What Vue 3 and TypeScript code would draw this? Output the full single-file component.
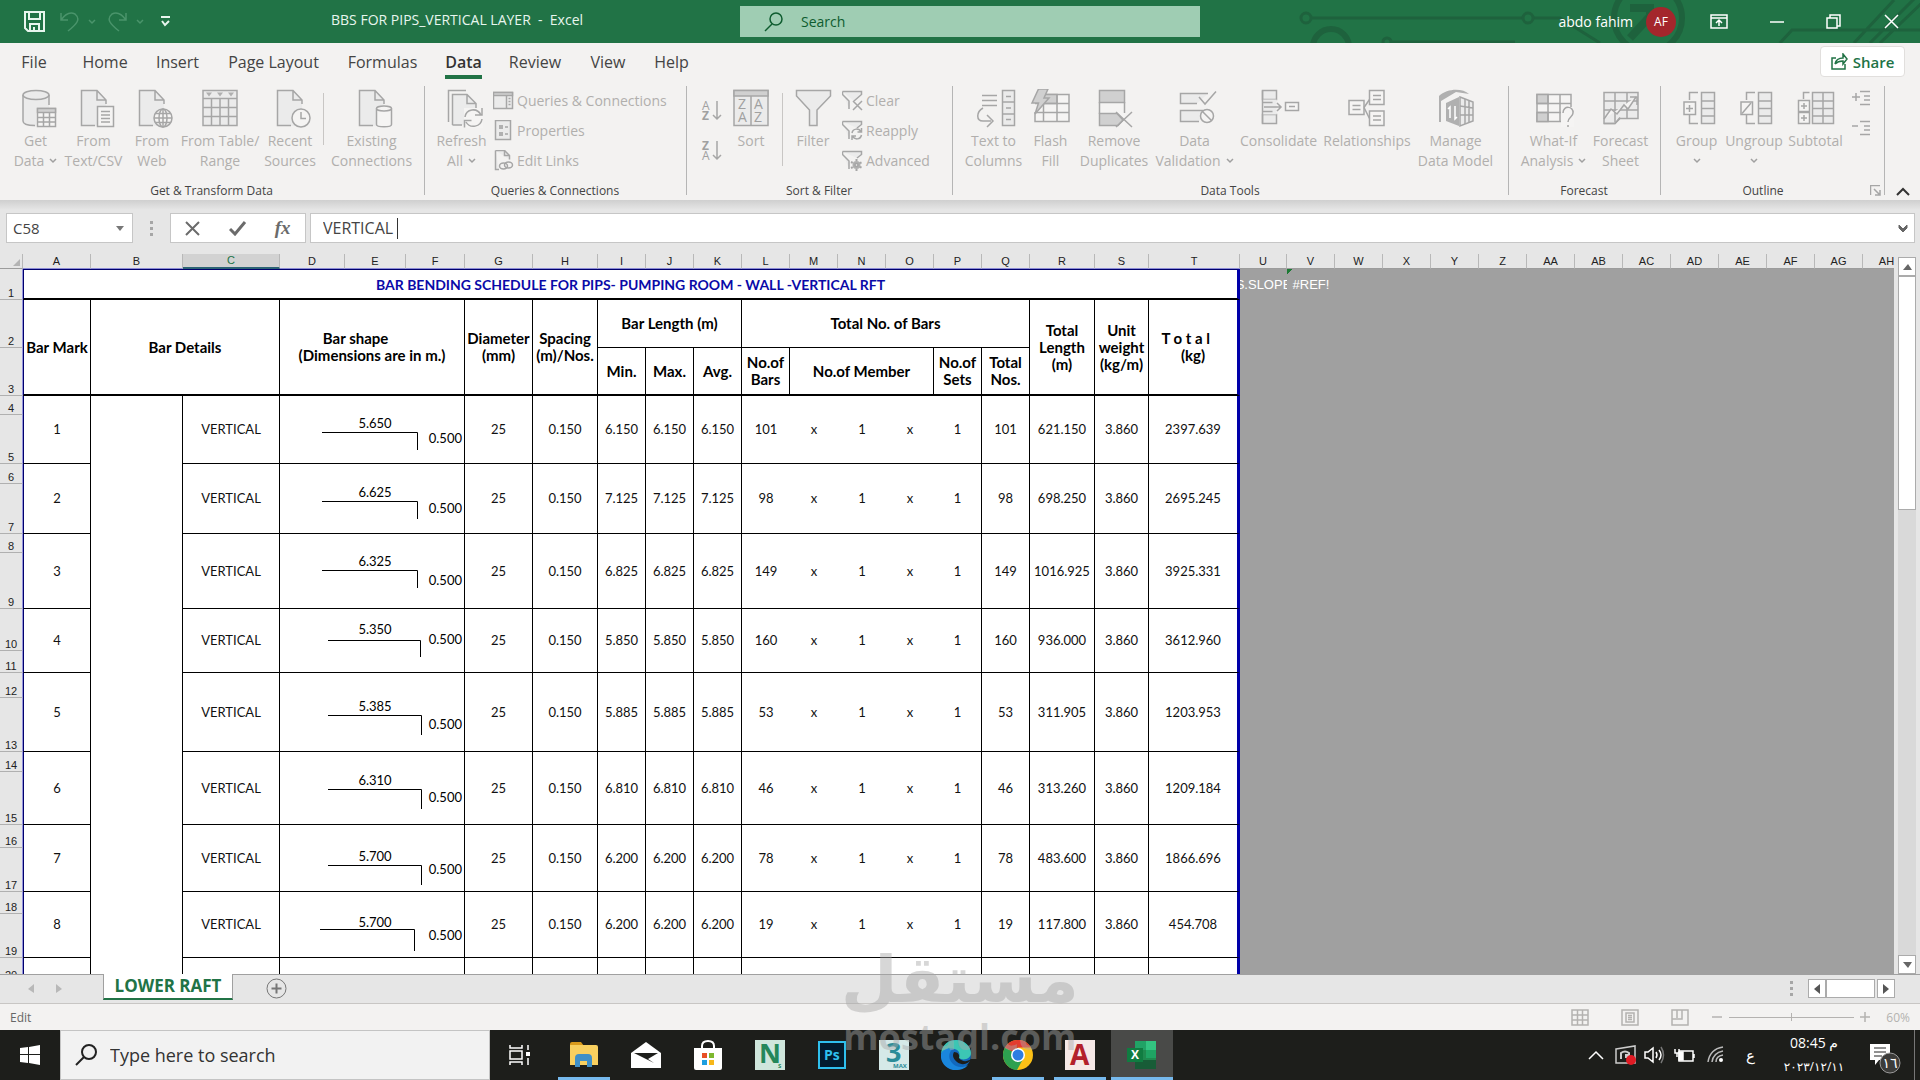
<script setup lang="ts">
interface Cmd {
  label: string[]
  icon: string
  width: number
  menu?: boolean
}

interface BarRow {
  mark: number
  top: number
  bottom: number
  length: string
  total: string
  count: number
  run: string
  weight: string
  x1: number
  x2: number
  line: number
  drop: number
  text: number
  side: number
}

const page = '<path class="f" d="M9.500 1.500H25L34 11V37H9.500Z" stroke="none"/><path d="M34 15V11L25 1.500H9.500V36.500H23M25 1.500V11H34"/>'

const icons: Record<string, string> = {
  getData:
    '<path class="f" d="M9 6V33c0 3 6 4.500 13 4.500V19H35V6z" stroke="none"/><ellipse class="f" cx="22" cy="6" rx="13" ry="4.500"/><path d="M9 6V32c0 3 5 4.500 12 4.500M35 6V16"/><path class="w" d="M23.500 19.500h18v18h-18z"/><path class="g" d="M23.500 19.500h18v4h-18z"/><path d="M29.500 23V37M35.500 23V37M23.500 28.500h18M23.500 33h18"/>',
  textCsv: page + '<path class="w" d="M25.500 17.500h16v20h-16z"/><path d="M29 22.500h9M29 26h9M29 29.500h9M29 33h9"/>',
  web: page + '<circle class="w" cx="33" cy="29" r="9"/><ellipse cx="33" cy="29" rx="4" ry="9"/><path d="M24 29h18M25.500 24.500h15M25.500 33.500h15M33 20v18"/>',
  table:
    '<path class="f" d="M5 1.500h34v35H5z"/><path d="M5 9.500h34M5 18.500h34M5 27.500h34M13.500 9.500v27M22 9.500v27M30.500 9.500v27"/><path class="d" d="M8 3.500h6l-3 4zM19 3.500h6l-3 4zM30 3.500h6l-3 4z"/>',
  recent: page + '<circle class="w" cx="33" cy="29" r="9"/><path d="M33 23v6.500h5"/>',
  existing: page + '<path class="w" d="M26.500 19.500v16c0 3 15 3 15 0v-16"/><ellipse class="w" cx="34" cy="19.500" rx="7.500" ry="2.500"/>',
  refresh:
    '<path d="M8.500 33V1.500H26"/><path class="f" d="M12.500 5.500H27l9 9V36H12.500z" stroke="none"/><path d="M12.500 36V5.500H27l9 9V19M12.500 36H22M27 5.500v9h9"/><path class="w" stroke="none" d="M24 19h19v20H24z"/><path d="M25 28c1-8 12-10 16-2M42 19v7h-7M42 30c-1 8-12 10-16 3M24.500 38.500v-7h7"/>',
  sort:
    '<path class="f" d="M5 1.500h34v35H5z"/><path class="g" d="M5 1.500h34v5.500H5z"/><path d="M22 7v29.500"/><g class="t" font-size="14"><text x="9" y="20">Z</text><text x="9" y="33">A</text><text x="25" y="20">A</text><text x="25" y="33">Z</text></g>',
  filter: '<path class="f" d="M5.500 1.500h34v5.500L26 21V36.500H18.500V21L5.500 7z"/>',
  columns:
    '<path class="f" d="M30.500 1.500h12v35h-12z"/><path d="M30.500 13h12M30.500 25h12M34 7.500h5M34 19h5M34 30.500h5M10 6.500h15M10 11.500h15M10 16.500h15M11 19c-7 4-7 13 0 13h8M15 26l6 6-6 6"/>',
  flash:
    '<path class="w" d="M14.500 5.500H40v27H6V23"/><path class="g" d="M14.500 5.500H28v9H14.500z"/><path d="M6 14.500h34M6 23.500h34M14.500 14.500v18M28 5.500v27"/><path class="g" d="M9.500 0H19l-4 9h5L6 25l3.500-11H3z"/>',
  duplicates:
    '<path class="w" d="M7.500 1.500h25v35h-25z" stroke="none"/><path class="g" d="M7.500 1.500h25v12h-25z"/><path class="g" d="M7.500 24.500H25L31 31l-5 5.500H7.500z"/><path d="M7.500 13v12M32.500 13V24M24 23l16 15M40 23L24 38"/>',
  validation:
    '<path class="f" d="M35 4.500H7.500v10H24M30 21.500H7.500v11H26"/><path d="M26 8l6 7L43 2.500"/><circle class="w" cx="34" cy="27" r="6.500"/><path d="M29.500 22.500l9 9"/>',
  consolidate:
    '<path class="f" d="M5.500 1.500h14v9h-14zM5.500 25.500h14v9h-14z"/><path class="f" d="M5.500 10.500h14v15h-14z" stroke="none"/><path d="M5.500 1.500v33M5.500 13.500h10M5.500 22.500h10M7 18h17M20 14l4 4-4 4"/><path class="w" d="M28.500 13.500h13v8h-13z"/><path d="M32 17.500h6"/>',
  relations:
    '<path class="w" d="M4 11.500h15v14H4zM24.500 1.500H39v14H24.500zM24.500 22H39v14.500H24.500z"/><path d="M7.500 16.500h8M7.500 20.500h8M28 6.500h8M28 10.500h8M28 27h8M28 31h8M19 18.500l5.500-8M19 18.500l5.500 11"/>',
  model:
    '<path class="d" d="M5 7C13-1 29-1 35 5L22 3 7 12V33H5z"/><path class="d" d="M12 14l13-6v29l-13-5z"/><path class="f" d="M26 8l13 5v19l-13 5z"/><path d="M26 17l13 2M26 26h13M31 10v25M35 12v21"/><path stroke="#fff" d="M16 29V18l-2 2M21 17v13l2-2"/>',
  whatIf:
    '<path class="w" d="M5 5.500h34v27H5z"/><path class="g" d="M5 5.500h11v9H5zM5 23.500h11v9H5z"/><path d="M16 5.500v27M28 5.500v27M5 14.500h34M5 23.500h34"/><path class="w" stroke="none" d="M29 18h13v20H29z"/><path d="M31 24c0-8 11-7 10 0 0 4-5 4-5 9M36 36v2"/>',
  forecast:
    '<path class="f" d="M5 3.500h34v26H21l-5 5H5z"/><path d="M5 12h34M5 21h34M16 3.500v30M28 3.500v26"/><path class="w" d="M5 30l7-10 6 5 7-9 4 4 8-12" fill="none"/><path d="M31 8h7v8M5 34.500h11l5-6"/>',
  group:
    '<path class="f" d="M26.500 3.500h13v31h-13z"/><path d="M26.500 12h13M26.500 19.500h13M26.500 27h13M14.500 11V3.500H23M14.500 26v8.500H23"/><path class="w" d="M9 13h11.500v12.500H9z"/><path d="M14.500 16v7M11 19.500h7"/>',
  ungroup:
    '<path class="f" d="M26.500 3.500h13v31h-13z"/><path d="M26.500 12h13M26.500 19.500h13M26.500 27h13M14.500 11V3.500H23M14.500 26v8.500H23"/><path class="w" d="M9 13h11.500v12.500H9z"/><path d="M10 24.500l9-10.500"/>',
  subtotal:
    '<path class="f" d="M18.500 3.500h21v31h-21z"/><path d="M18.500 12h21M18.500 19.500h21M18.500 27h21M29 3.500v31M9.500 10V3.500h6"/><path class="w" d="M4.500 11.500h11v11h-11zM4.500 23.500h11v11h-11z"/><path d="M10 14v6M7 17h6M10 26v6M7 29h6"/>',
}

const small: Record<string, string> = {
  queries: '<path class="f" d="M.5 2.500h19v16H.5z"/><path class="g" d="M.5 2.500h19v3H.5z"/><path d="M13.500 5.500v13M15.500 8.500h2M15.500 11.500h2M15.500 14.500h2"/>',
  properties: '<path class="f" d="M2.500.5h15v19h-15z"/><path class="d" d="M6 5h4v4H6zM6 12h4v4H6z"/><path d="M12 7h3M12 14h3"/>',
  links: '<path class="f" d="M2.500.5h9l5 5v4M2.500.5v19H6"/><path d="M11.500.5v5h5"/><ellipse cx="10.500" cy="16" rx="4" ry="3"/><ellipse cx="15.500" cy="15" rx="4" ry="3"/>',
  clear: '<path class="f" d="M.5 1.500h19v3L12 11M.5 1.500v3L7 11v8"/><path d="M11 11l9 9M20 11l-9 9"/>',
  reapply: '<path class="f" d="M.5 1.500h19v3L15 8M.5 1.500v3L7 11v8"/><path d="M10 13c1-5 7-5 9-1M19.500 8v4h-4M19.500 15c-1 5-7 5-9 1M10 20v-4h4"/>',
  advanced: '<path class="f" d="M.5 1.500h19v3L15 8M.5 1.500v3L7 11v8"/><circle class="d" cx="14.500" cy="15" r="4"/><circle class="w" cx="14.500" cy="15" r="1.500"/><path stroke-width="2" d="M14.500 9v12M9 12l11 6M9 18l11-6" stroke-dasharray="2 8"/>',
}

const getCmds: Cmd[] = [
  { label: ['Get', 'Data'], icon: 'getData', width: 55, menu: true },
  { label: ['From', 'Text/CSV'], icon: 'textCsv', width: 61 },
  { label: ['From', 'Web'], icon: 'web', width: 56 },
  { label: ['From Table/', 'Range'], icon: 'table', width: 80 },
  { label: ['Recent', 'Sources'], icon: 'recent', width: 60 },
]
const toolCmds: Cmd[] = [
  { label: ['Text to', 'Columns'], icon: 'columns', width: 67 },
  { label: ['Flash', 'Fill'], icon: 'flash', width: 47 },
  { label: ['Remove', 'Duplicates'], icon: 'duplicates', width: 80 },
  { label: ['Data', 'Validation'], icon: 'validation', width: 81, menu: true },
  { label: ['Consolidate'], icon: 'consolidate', width: 87 },
  { label: ['Relationships'], icon: 'relations', width: 90 },
  { label: ['Manage', 'Data Model'], icon: 'model', width: 87 },
]
const forecastCmds: Cmd[] = [
  { label: ['What-If', 'Analysis'], icon: 'whatIf', width: 71, menu: true },
  { label: ['Forecast', 'Sheet'], icon: 'forecast', width: 63 },
]
const outlineCmds: Cmd[] = [
  { label: ['Group', ''], icon: 'group', width: 55, menu: true },
  { label: ['Ungroup', ''], icon: 'ungroup', width: 60, menu: true },
  { label: ['Subtotal'], icon: 'subtotal', width: 63 },
]
const existingCmd: Cmd[] = [{ label: ['Existing', 'Connections'], icon: 'existing', width: 87 }]
const refreshCmd: Cmd[] = [{ label: ['Refresh', 'All'], icon: 'refresh', width: 57, menu: true }]
const sortCmd: Cmd[] = [{ label: ['Sort'], icon: 'sort', width: 52 }]
const filterCmd: Cmd[] = [{ label: ['Filter'], icon: 'filter', width: 52 }]

const groups = [
  { name: 'Get & Transform Data', width: 425, parts: [getCmds, existingCmd], smalls: [] as string[][], pad: 8 },
  { name: 'Queries & Connections', width: 262, parts: [refreshCmd], smalls: [['queries', 'Queries & Connections'], ['properties', 'Properties'], ['links', 'Edit Links']], pad: 8 },
  { name: 'Sort & Filter', width: 266, parts: [sortCmd, filterCmd], smalls: [['clear', 'Clear'], ['reapply', 'Reapply'], ['advanced', 'Advanced']], pad: 13 },
  { name: 'Data Tools', width: 556, parts: [toolCmds], smalls: [], pad: 7 },
  { name: 'Forecast', width: 152, parts: [forecastCmds], smalls: [], pad: 9 },
  { name: 'Outline', width: 224, parts: [outlineCmds], smalls: [], pad: 8 },
]

const tabs = [
  { name: 'File', width: 52 },
  { name: 'Home', width: 90 },
  { name: 'Insert', width: 55 },
  { name: 'Page Layout', width: 137 },
  { name: 'Formulas', width: 81 },
  { name: 'Data', width: 81 },
  { name: 'Review', width: 62 },
  { name: 'View', width: 84 },
  { name: 'Help', width: 43 },
]

const columns = [
  ['A', 68], ['B', 92], ['C', 97], ['D', 65], ['E', 61], ['F', 59], ['G', 68], ['H', 65],
  ['I', 48], ['J', 48], ['K', 48], ['L', 48], ['M', 48], ['N', 48], ['O', 48], ['P', 48],
  ['Q', 48], ['R', 65], ['S', 54], ['T', 91], ['U', 47], ['V', 48], ['W', 48], ['X', 48],
  ['Y', 48], ['Z', 48], ['AA', 48], ['AB', 48], ['AC', 48], ['AD', 48], ['AE', 48],
  ['AF', 48], ['AG', 48], ['AH', 48],
] as [string, number][]

const rowHeadWidth = 23
const tableWidth = columns.reduce((sum, c) => sum + c[1], rowHeadWidth)

const bars: BarRow[] = [
  { mark: 1, top: 19, bottom: 49, length: '5.650', total: '6.150', count: 101, run: '621.150', weight: '2397.639', x1: 42, x2: 137, line: 36, drop: 54, text: 32, side: 47 },
  { mark: 2, top: 20, bottom: 50, length: '6.625', total: '7.125', count: 98, run: '698.250', weight: '2695.245', x1: 42, x2: 137, line: 37, drop: 55, text: 33, side: 49 },
  { mark: 3, top: 19, bottom: 56, length: '6.325', total: '6.825', count: 149, run: '1016.925', weight: '3925.331', x1: 42, x2: 137, line: 36, drop: 54, text: 32, side: 51 },
  { mark: 4, top: 42, bottom: 22, length: '5.350', total: '5.850', count: 160, run: '936.000', weight: '3612.960', x1: 48, x2: 140, line: 31, drop: 48, text: 25, side: 35 },
  { mark: 5, top: 25, bottom: 54, length: '5.385', total: '5.885', count: 53, run: '311.905', weight: '1203.953', x1: 48, x2: 141, line: 42, drop: 62, text: 38, side: 56 },
  { mark: 6, top: 20, bottom: 53, length: '6.310', total: '6.810', count: 46, run: '313.260', weight: '1209.184', x1: 48, x2: 141, line: 37, drop: 57, text: 33, side: 50 },
  { mark: 7, top: 23, bottom: 44, length: '5.700', total: '6.200', count: 78, run: '483.600', weight: '1866.696', x1: 48, x2: 141, line: 40, drop: 60, text: 36, side: 49 },
  { mark: 8, top: 22, bottom: 44, length: '5.700', total: '6.200', count: 19, run: '117.800', weight: '454.708', x1: 40, x2: 134, line: 37, drop: 59, text: 35, side: 48 },
]
</script>

<template>
  <div class="app">
    <header class="title">
      <svg class="circuit" width="640" height="43" aria-hidden="true">
        <g fill="none" stroke="#1e623d" stroke-width="3">
          <circle cx="26" cy="18" r="5" /><path d="M32 18H242M254 18h26l40 25" /><circle cx="248" cy="18" r="5" />
          <circle cx="51" cy="47" r="18" stroke-width="6" /><circle cx="107" cy="42" r="4" /><path d="M112 42H235" />
          <circle cx="368" cy="18" r="34" stroke-width="6" /><path d="M350 8h20v6M350 38l24-26" stroke-width="8" />
          <path d="M500 43l12-13H640M574 43l40-43M590 43l50-50M600 43l45-43" />
        </g>
      </svg>
      <div class="quick">
        <button class="ib save" aria-label="Save"><svg width="22" height="22"><path d="M1 1h19v19H4l-3-3zM5 1v7h11V1M6 20v-7h9v7M10 16v4" stroke="#e8f6ee" stroke-width="2" fill="none" /></svg></button>
        <button class="ib dim undo" aria-label="Undo"><svg width="20" height="22"><path d="M1 2v7h7M1 9C6 2 11 1 15 3c6 5 2 10-7 17" /></svg></button>
        <button class="ib dim chev" aria-label="Undo list"><svg width="9" height="6"><path d="M1 1l3 3 3-3" /></svg></button>
        <button class="ib dim undo" aria-label="Redo"><svg width="20" height="22"><path d="M18 2v7h-7M18 9C13 2 8 1 4 3c-6 5-2 10 7 17" /></svg></button>
        <button class="ib dim chev" aria-label="Redo list"><svg width="9" height="6"><path d="M1 1l3 3 3-3" /></svg></button>
        <button class="ib more" aria-label="Customize toolbar"><svg width="11" height="11"><path d="M1 1h9M2 5l3 4 4-4" stroke="#e8f6ee" stroke-width="2" fill="none" /></svg></button>
      </div>
      <div class="doc">BBS FOR PIPS_VERTICAL LAYER&nbsp; -&nbsp; Excel</div>
      <label class="find">
        <svg width="20" height="20"><circle cx="12" cy="7" r="6" /><path d="M8 12l-7 7" /></svg>
        <input type="text" placeholder="Search" aria-label="Search" />
      </label>
      <div class="winbar">
        <span class="user">abdo fahim</span>
        <span class="avatar">AF</span>
        <button class="ib" aria-label="Ribbon display options"><svg width="18" height="16"><path d="M1 1h16v13H1zM1 4h16M9 12V6M6 9l3-3 3 3" /></svg></button>
        <button class="ib" aria-label="Minimize"><svg width="14" height="16"><path d="M0 8h14" /></svg></button>
        <button class="ib" aria-label="Restore"><svg width="16" height="16"><path d="M1 4h10v10H1zM4 4V1h10v11h-3" /></svg></button>
        <button class="ib" aria-label="Close"><svg width="16" height="16"><path d="M1 1l13 13M14 1L1 14" /></svg></button>
      </div>
    </header>

    <nav class="tabs">
      <button v-for="t in tabs" :key="t.name" :class="{ on: t.name === 'Data' }" :style="{ width: t.width + 'px' }"><span>{{ t.name }}</span></button>
      <button class="share"><svg width="17" height="17"><path d="M5 5H1v11h13v-5M4 11c1-5 4-6 8-6V1l4 5-4 5V8c-4 0-6 1-8 3" fill="none" stroke="#217346" stroke-width="1.500" /></svg>Share</button>
    </nav>

    <section class="ribbon">
      <div v-for="g in groups" :key="g.name" class="rgroup" :style="{ width: g.width + 'px' }">
        <div class="items" :style="{ paddingLeft: g.pad + 'px' }">
          <div v-if="g.name === 'Sort & Filter'" class="az">
            <button aria-label="Sort A to Z"><svg class="ri" width="24" height="26"><g class="t" font-size="12"><text x="2" y="12">A</text><text x="2" y="22" font-weight="bold">Z</text></g><path d="M17 3v18M13 17l4 4 4-4" /></svg></button>
            <button aria-label="Sort Z to A"><svg class="ri" width="24" height="26"><g class="t" font-size="12"><text x="2" y="12" font-weight="bold">Z</text><text x="2" y="22">A</text></g><path d="M17 3v18M13 17l4 4 4-4" /></svg></button>
          </div>
          <template v-for="(part, i) in g.parts" :key="i">
            <i v-if="i > 0" class="isep" :class="{ tall: g.name === 'Sort & Filter' }"></i>
            <button v-for="c in part" :key="c.icon" class="big" :style="{ width: c.width + 'px' }">
              <svg class="ri" width="44" height="40" v-html="icons[c.icon]"></svg>
              <span v-for="(l, k) in c.label" :key="k">{{ l }}<svg v-if="c.menu && k === 1" class="mc" width="8" height="6"><path d="M1 1l3 3 3-3" /></svg></span>
            </button>
          </template>
          <div v-if="g.smalls.length" class="smalls">
            <button v-for="s in g.smalls" :key="s[0]"><svg class="ri" width="21" height="21" v-html="small[s[0]]"></svg>{{ s[1] }}</button>
          </div>
          <div v-if="g.name === 'Outline'" class="detail">
            <button aria-label="Show Detail"><svg class="ri" width="19" height="16"><path d="M8 1.500h10M12 6h6M12 10h6M8 14.500h10M0 7h8M4 3v8" /></svg></button>
            <button aria-label="Hide Detail"><svg class="ri" width="19" height="16"><path d="M8 1.500h10M12 6h6M12 10h6M8 14.500h10M0 6h6" /></svg></button>
          </div>
        </div>
        <div class="gname"><span>{{ g.name }}</span>
          <button v-if="g.name === 'Outline'" class="launch" aria-label="Outline settings"><svg class="ri" width="11" height="11"><path d="M.5 10V.5H10M4 4l6 6M10 5v5H5" /></svg></button>
        </div>
      </div>
      <button class="collapse" aria-label="Collapse ribbon"><svg width="14" height="9"><path d="M1 8l6-6 6 6" fill="none" stroke="#333" stroke-width="2" /></svg></button>
    </section>

    <section class="fbar">
      <div class="namebox"><input type="text" value="C58" aria-label="Name Box" /><svg width="8" height="5"><path d="M0 0h8L4 5z" fill="#777" /></svg></div>
      <div class="dots"><i></i><i></i><i></i></div>
      <div class="fbtns">
        <button aria-label="Cancel"><svg width="16" height="15"><path d="M1 1l13 13M14 1L1 14" stroke="#6b6b6b" stroke-width="2" /></svg></button>
        <button aria-label="Enter"><svg width="18" height="15"><path d="M1 8l5 5L16 1" stroke="#6b6b6b" stroke-width="3" fill="none" /></svg></button>
        <button class="fx" aria-label="Insert Function">fx</button>
      </div>
      <div class="formula"><input type="text" value="VERTICAL" aria-label="Formula Bar" /><i class="caret"></i><svg width="10" height="9"><path d="M1 1l4 4 4-4v3L5 8 1 4z" fill="#666" stroke="#666" /></svg></div>
    </section>

    <main class="work">
      <div class="sheet">
        <table :style="{ width: tableWidth + 'px' }">
          <colgroup><col :style="{ width: rowHeadWidth + 'px' }" /><col v-for="c in columns" :key="c[0]" :style="{ width: c[1] + 'px' }" /></colgroup>
          <thead>
            <tr>
              <th class="corner"><svg width="8" height="8"><path d="M7 0v7H0z" fill="#b4b4b4" /></svg></th>
              <th v-for="(c, i) in columns" :key="c[0]" scope="col" :class="{ inside: i < 20, pick: c[0] === 'C' }">{{ c[0] }}</th>
            </tr>
          </thead>
          <tbody>
            <tr class="r1">
              <th class="rn">1</th>
              <td colspan="20" class="caption last first">BAR BENDING SCHEDULE FOR PIPS- PUMPING ROOM - WALL -VERTICAL RFT</td>
              <td class="out"><div class="over">S.SLOPE</div></td>
              <td class="out flag">#REF!</td>
              <td class="out" colspan="12"></td>
            </tr>
            <tr class="hd">
              <th class="rn">2</th>
              <th rowspan="2" class="first b2">Bar Mark</th>
              <th rowspan="2" colspan="2" class="b2">Bar Details</th>
              <th rowspan="2" colspan="3" class="b2">Bar shape&nbsp;&nbsp;&nbsp;&nbsp;&nbsp;&nbsp;&nbsp;&nbsp;&nbsp;<br />(Dimensions are in m.)</th>
              <th rowspan="2" class="b2">Diameter<br />(mm)</th>
              <th rowspan="2" class="b2">Spacing<br />(m)/Nos.</th>
              <th colspan="3">Bar Length (m)</th>
              <th colspan="6">Total No. of Bars</th>
              <th rowspan="2" class="b2">Total<br />Length<br />(m)</th>
              <th rowspan="2" class="b2">Unit<br />weight<br />(kg/m)</th>
              <th rowspan="2" class="b2 last">T o t a l&nbsp;&nbsp;&nbsp;&nbsp;<br />(kg)</th>
              <td class="out" colspan="14" rowspan="19"></td>
            </tr>
            <tr class="hd">
              <th class="rn">3</th>
              <th class="b2">Min.</th><th class="b2">Max.</th><th class="b2">Avg.</th>
              <th class="b2">No.of<br />Bars</th><th class="b2" colspan="3">No.of Member</th>
              <th class="b2">No.of<br />Sets</th><th class="b2">Total<br />Nos.</th>
            </tr>
            <template v-for="(b, i) in bars" :key="b.mark">
              <tr :style="{ height: b.top + 'px' }">
                <th class="rn">{{ 4 + i * 2 }}</th>
                <td rowspan="2" class="first">{{ b.mark }}</td>
                <td v-if="i === 0" rowspan="17"></td>
                <td rowspan="2">VERTICAL</td>
                <td rowspan="2" colspan="3" class="shape">
                  <svg width="184" :height="b.top + b.bottom - 1">
                    <path :d="`M${b.x1} ${b.line}.5H${b.x2}.5V${b.drop}`" fill="none" stroke="#000" />
                    <text x="95" :y="b.text" text-anchor="middle">{{ b.length }}</text>
                    <text x="182" :y="b.side" text-anchor="end">0.500</text>
                  </svg>
                </td>
                <td rowspan="2">25</td>
                <td rowspan="2">0.150</td>
                <td rowspan="2">{{ b.total }}</td><td rowspan="2">{{ b.total }}</td><td rowspan="2">{{ b.total }}</td>
                <td rowspan="2" class="open">{{ b.count }}</td>
                <td rowspan="2" class="open">x</td><td rowspan="2" class="open">1</td><td rowspan="2" class="open">x</td>
                <td rowspan="2">1</td>
                <td rowspan="2">{{ b.count }}</td>
                <td rowspan="2">{{ b.run }}</td>
                <td rowspan="2">3.860</td>
                <td rowspan="2" class="last">{{ b.weight }}</td>
              </tr>
              <tr :style="{ height: b.bottom + 'px' }"><th class="rn">{{ 5 + i * 2 }}</th></tr>
            </template>
            <tr class="r20">
              <th class="rn">20</th>
              <td class="first"></td><td></td><td colspan="3"></td><td></td><td></td><td></td><td></td><td></td>
              <td class="open"></td><td class="open"></td><td class="open"></td><td class="open"></td><td></td><td></td><td></td><td></td><td class="last"></td>
            </tr>
          </tbody>
        </table>
      </div>
      <div class="vscroll">
        <button aria-label="Scroll up"><svg width="9" height="6"><path d="M0 6h9L5 0z" fill="#666" /></svg></button>
        <div class="vthumb"></div>
        <div class="grow"></div>
        <button aria-label="Scroll down"><svg width="9" height="6"><path d="M0 0h9L5 6z" fill="#666" /></svg></button>
      </div>
    </main>

    <section class="sheets">
      <button class="nav" aria-label="Previous sheet"><svg width="6" height="9"><path d="M6 0v9L0 5z" fill="#b8b8b8" /></svg></button>
      <button class="nav" aria-label="Next sheet"><svg width="6" height="9"><path d="M0 0v9l6-4z" fill="#b8b8b8" /></svg></button>
      <button class="stab">LOWER RAFT</button>
      <button class="add" aria-label="New sheet"><svg width="21" height="21"><circle cx="10.500" cy="10.500" r="9.500" fill="none" stroke="#777" /><path d="M10.500 5.500v10M5.500 10.500h10" stroke="#777" stroke-width="2" /></svg></button>
      <div class="dots hd3"><i></i><i></i><i></i></div>
      <div class="hscroll">
        <button aria-label="Scroll left"><svg width="6" height="10"><path d="M6 0v10L0 5z" fill="#555" /></svg></button>
        <div class="hthumb"></div>
        <button aria-label="Scroll right"><svg width="6" height="10"><path d="M0 0v10l6-5z" fill="#555" /></svg></button>
      </div>
    </section>

    <section class="status">
      <span class="mode">Edit</span>
      <button class="view" aria-label="Normal"><svg width="18" height="17"><path d="M1 1h16v15H1zM6.500 1v15M11.500 1v15M1 6h16M1 11h16" /></svg></button>
      <button class="view" aria-label="Page Layout"><svg width="18" height="17"><path d="M1 1h16v15H1zM5 4h8v9H5zM7 6.500h4M7 8.500h4M7 10.500h4" /></svg></button>
      <button class="view" aria-label="Page Break Preview"><svg width="18" height="17"><path d="M1 1h16v15H1zM6 1v8M11 1v9H1" /></svg></button>
      <button class="zb" aria-label="Zoom out"><svg width="10" height="10"><path d="M0 5h10" /></svg></button>
      <input class="zoom" type="range" value="50" aria-label="Zoom" />
      <button class="zb" aria-label="Zoom in"><svg width="10" height="10"><path d="M0 5h10M5 0v10" /></svg></button>
      <span class="pct">60%</span>
    </section>

    <footer class="task">
      <button class="start" aria-label="Start"><svg width="20" height="20"><path d="M0 3l8-1v7H0zM9 2l11-2v9H9zM0 10h8v8l-8-1zM9 10h11v10L9 18z" fill="#fff" /></svg></button>
      <label class="tsearch">
        <svg width="22" height="22"><circle cx="14" cy="8" r="7" fill="none" stroke="#222" stroke-width="2" /><path d="M9 13l-8 8" stroke="#222" stroke-width="2" /></svg>
        <input type="text" placeholder="Type here to search" aria-label="Type here to search" />
      </label>
      <button class="tv" aria-label="Task View"><svg width="22" height="20"><path d="M1 0v3h12V0M1 20v-3h12v3M1 6h12v8H1zM19 0v5M19 13v7" fill="none" stroke="#fff" stroke-width="1.500" /><path d="M17 7h4v4h-4z" fill="#fff" /></svg></button>
      <button class="app-b run" aria-label="File Explorer"><svg width="30" height="26"><path d="M1 2q0-2 2-2h9l3 4H1z" fill="#d99a1c" /><path d="M1 3h26q2 0 2 2v18H1z" fill="#f8cf5f" /><path d="M6 25V16q0-4 4-4h9q4 0 4 4v9h-5v-6h-7v6z" fill="#3f8fc7" /></svg></button>
      <button class="app-b" aria-label="Mail"><svg width="30" height="26"><path d="M0 11L15 0l15 11v15H0z" fill="#fff" /><path d="M3 11h24L17 17l6 4z" fill="#1d1e1b" /></svg></button>
      <button class="app-b" aria-label="Microsoft Store"><svg width="30" height="30"><path d="M9 11V6q0-5 6-5 6 0 6 5v5" fill="none" stroke="#fff" stroke-width="2" /><path d="M1 8h28v20q0 2-2 2H3q-2 0-2-2z" fill="#fff" /><path d="M9 13h5v5H9z" fill="#e84f25" /><path d="M16 13h5v5h-5z" fill="#7eb82f" /><path d="M9 20h5v5H9z" fill="#1e9fe0" /><path d="M16 20h5v5h-5z" fill="#f7b719" /></svg></button>
      <button class="app-b" aria-label="Navisworks"><svg width="30" height="30"><path fill="#cfe6dc" d="M0 0h30v30H0z" /><text x="4" y="23" font-size="27" font-weight="bold" fill="#24875a">N</text><text x="23" y="28" font-size="6" font-weight="bold" fill="#24875a">S</text></svg></button>
      <button class="app-b" aria-label="Photoshop"><svg width="28" height="28"><path fill="#021c2e" stroke="#2fc0ee" stroke-width="2" d="M1 1h26v26H1z" /><text x="6" y="19" font-size="14" font-weight="bold" fill="#2fc0ee">Ps</text></svg></button>
      <button class="app-b" aria-label="3ds Max"><svg width="30" height="30"><path fill="#d5e9e8" d="M0 0h30v30H0z" /><text x="7" y="22" font-size="27" font-weight="bold" fill="#2a8c98">3</text><text x="14" y="28" font-size="6" font-weight="bold" fill="#2a8c98">MAX</text></svg></button>
      <button class="app-b" aria-label="Edge"><svg width="30" height="30"><circle cx="15" cy="15" r="15" fill="#1268bd" /><path d="M0 14C1 4 8 0 15 0c9 0 15 7 15 13 0 6-8 8-12 5 2-6-2-10-8-9C5 9 1 11 0 14z" fill="#3cc6b4" /><path d="M0 14c2-5 8-7 12-5-5 3-6 12 3 17 4 2 9 1 12-1-3 4-8 5-12 5C6 30-1 23 0 14z" fill="#1a86dc" /><path d="M13 12c4 0 6 3 5 6 3 4 8 4 12 1-2 5-9 7-14 3-4-3-5-7-3-10z" fill="#1d1e1b" /></svg></button>
      <button class="app-b run" aria-label="Chrome"><svg width="30" height="30"><circle cx="15" cy="15" r="15" fill="#fbc016" /><path d="M15 15L2 7.500A15 15 0 0 1 28 7.500H15z" fill="#e33b2e" /><path d="M2 7.500A15 15 0 0 0 14 30l6-11-5-4z" fill="#2da04f" /><circle cx="15" cy="15" r="7" fill="#fff" /><circle cx="15" cy="15" r="5.500" fill="#2f7de1" /></svg></button>
      <button class="app-b run" aria-label="AutoCAD"><svg width="30" height="30"><path fill="#f6e9e7" d="M0 0h30v30H0z" /><text x="5" y="25" font-size="28" font-weight="bold" fill="#b3212b">A</text></svg></button>
      <button class="app-b run active" aria-label="Excel"><svg width="30" height="28"><path d="M8 0h21v28H8z" fill="#1f8a4f" /><path d="M8 0h11v9H8z" fill="#21a366" /><path d="M19 0h10v9H19z" fill="#33c481" /><path d="M19 9h10v8H19z" fill="#1fa463" /><path d="M8 19h21v9H8z" fill="#185c37" /><path d="M0 7h16v14H0z" fill="#107c41" /><text x="4" y="18" font-size="12" font-weight="bold" fill="#fff">X</text></svg></button>
      <div class="tray">
        <button aria-label="Show hidden icons" class="t1"><svg width="16" height="10"><path d="M1 9l7-7 7 7" /></svg></button>
        <button aria-label="Meet Now" class="t2"><svg width="22" height="22"><path d="M1 5l19-3v17H1z" stroke="#ccc" /><path d="M6 15V9q4-3 8 0v2h-3v2h3" stroke="#ccc" stroke-width="2" /><circle cx="16" cy="16" r="5" fill="#e01b24" stroke="none" /></svg></button>
        <button aria-label="Volume" class="t3"><svg width="21" height="18"><path d="M1 6h3l5-4v14l-5-4H1zM12 6q2 3 0 6M15 4q4 5 0 10" /><path d="M17 1q5 8 0 16" stroke="#777" /></svg></button>
        <button aria-label="Battery" class="t4"><svg width="21" height="14"><path d="M5 3h14v10H5zM20 6v4M1 1v4h4V1M3 5v4" /><path d="M5 4h4v8H5z" fill="#fff" /></svg></button>
        <button aria-label="Network" class="t5"><svg width="18" height="18"><path d="M1 16Q3 3 16 1M5 16q1-9 11-11M9 16q0-6 7-7" stroke="#bbb" /><circle cx="14" cy="14" r="2" fill="#fff" stroke="none" /></svg></button>
        <button class="lang">ع</button>
        <button class="clock"><span>08:45 م</span><span class="date">٢٠٢٣/١٢/١١</span></button>
        <button class="note" aria-label="Notifications"><svg width="34" height="34"><path d="M0 1h20v16H9l-4 5v-5H0z" fill="#fff" stroke="none" /><path d="M4 5h12M4 9h12M4 13h8" stroke="#222" /><circle cx="20" cy="20" r="10" fill="#3c3c3a" stroke="#9a9a9a" /><text x="20" y="25" text-anchor="middle" fill="#fff" font-size="14">١٦</text></svg></button>
      </div>
    </footer>

    <div class="mark" aria-hidden="true"><span lang="ar" class="ar">مستقل</span><span class="en">mostaql.com</span></div>
  </div>
</template>

<style>
html,
body {
  margin: 0;
  background: #e6e6e6;
}
</style>

<style scoped>
.app {
  position: relative;
  display: flex;
  flex-direction: column;
  height: 100vh;
  overflow: hidden;
  font-family: "Open Sans", "DejaVu Sans", sans-serif;
  font-size: 14px;
}
.app * {
  box-sizing: border-box;
}
button {
  border: 0;
  padding: 0;
  margin: 0;
  background: none;
  font: inherit;
  color: inherit;
  white-space: nowrap;
}
input {
  border: 0;
  padding: 0;
  margin: 0;
  background: none;
  font: inherit;
  color: inherit;
  min-width: 0;
  outline: 0;
}
svg {
  display: block;
  flex: none;
}
.title {
  position: relative;
  display: grid;
  grid-template-columns: 740px 460px 1fr;
  grid-template-rows: 43px;
  align-items: center;
  background: #217346;
  color: #e8f6ee;
  flex: none;
}
.circuit {
  position: absolute;
  right: 0;
  top: 0;
}
.quick {
  grid-column: 1;
  grid-row: 1;
  display: flex;
  align-items: center;
  padding-left: 24px;
  height: 43px;
}
.save {
  margin-right: 14px;
}
.dim svg {
  fill: none;
  stroke: #4a946b;
  stroke-width: 1.5;
}
.undo {
  width: 20px;
  margin-right: 8px;
}
.chev {
  margin-right: 11px;
}
.more {
  margin-left: 4px;
}
.doc {
  grid-column: 1;
  grid-row: 1;
  padding-left: 331px;
  height: 43px;
  line-height: 39px;
  pointer-events: none;
}
.find {
  display: flex;
  align-items: center;
  gap: 17px;
  height: 31px;
  padding-left: 24px;
  background: #9fcdb3;
}
.find svg {
  fill: none;
  stroke: #0e5c2f;
  stroke-width: 1.5;
}
.find input,
.find input::placeholder {
  color: #0e5c2f;
  opacity: 1;
}
.winbar {
  position: relative;
  display: flex;
  align-items: center;
  justify-content: flex-end;
  padding-right: 20px;
  color: #fff;
}
.winbar svg {
  fill: none;
  stroke: #fff;
  stroke-width: 1.5;
}
.winbar .ib + .ib {
  margin-left: 42px;
}
.avatar {
  width: 30px;
  height: 30px;
  margin: 0 34px 0 13px;
  border-radius: 50%;
  background: #a4262c;
  font-size: 12px;
  line-height: 30px;
  text-align: center;
}
.tabs {
  display: flex;
  flex: none;
  height: 40px;
  padding: 0 15px 0 8px;
  background: #f3f2f1;
  color: #444;
  font-size: 16px;
}
.tabs > button {
  display: flex;
  justify-content: center;
  align-items: flex-start;
  height: 40px;
}
.tabs span {
  height: 36px;
  line-height: 38px;
}
.tabs .on {
  font-weight: 600;
  color: #333;
}
.tabs .on span {
  border-bottom: 4px solid #217346;
}
.tabs .share {
  align-items: center;
  gap: 5px;
  width: 85px;
  height: 31px;
  margin: 3px 0 0 auto;
  border: 1px solid #e1dfdd;
  border-radius: 4px;
  background: #fff;
  color: #217346;
  font-weight: 600;
  font-size: 15px;
}
.ribbon {
  display: flex;
  flex: none;
  height: 117px;
  background: #f3f2f1;
  color: #b1afad;
}
.rgroup {
  position: relative;
  display: flex;
  flex-direction: column;
  flex: none;
}
.rgroup::after {
  content: "";
  position: absolute;
  right: 0;
  top: 3px;
  height: 109px;
  border-right: 1px solid #b5b5b5;
}
.items {
  display: flex;
  height: 98px;
  align-items: flex-start;
}
.big {
  display: flex;
  flex-direction: column;
  align-items: center;
  flex: none;
  padding-top: 6px;
}
.big > span {
  display: flex;
  align-items: center;
  gap: 5px;
  height: 20px;
  line-height: 20px;
}
.big > .ri {
  margin-bottom: 2px;
}
.mc {
  fill: none;
  stroke: #a0a0a0;
  stroke-width: 1.5;
}
.ri {
  fill: none;
  stroke: #a6a6a6;
  stroke-width: 1.5;
}
.ri :deep(.f) {
  fill: #ebebeb;
}
.ri :deep(.w) {
  fill: #f5f4f3;
}
.ri :deep(.g) {
  fill: #d0d0d0;
}
.ri :deep(.d) {
  fill: #b0b0b0;
  stroke: none;
}
.ri :deep(.t) {
  fill: #a0a0a0;
  stroke: none;
  font-family: "Open Sans", sans-serif;
}
.isep {
  width: 1px;
  height: 52px;
  margin: 10px 4px 0 3px;
  background: #c8c6c4;
}
.isep.tall {
  height: 73px;
  margin: 10px 4px 0 5px;
}
.smalls {
  display: flex;
  flex-direction: column;
  padding-top: 2px;
  margin-left: 3px;
}
.smalls button {
  display: flex;
  align-items: center;
  gap: 3px;
  height: 30px;
}
.az {
  display: flex;
  flex-direction: column;
  gap: 14px;
  width: 25px;
  padding-top: 15px;
}
.detail {
  display: flex;
  flex-direction: column;
  gap: 14px;
  padding: 7px 0 0 5px;
}
.gname {
  display: flex;
  justify-content: center;
  align-items: center;
  height: 19px;
  padding-right: 2px;
  line-height: 19px;
  color: #444;
  font-size: 12px;
}
.gname span {
  flex: 1;
  text-align: center;
}
.launch {
  padding: 0 2px 0 5px;
}
.collapse {
  margin: 100px 0 0 auto;
  width: 35px;
  padding-left: 11px;
}
.fbar {
  display: flex;
  align-items: flex-start;
  flex: none;
  height: 54px;
  padding: 13px 5px 0 6px;
  background: linear-gradient(#cfcfcf, #e6e6e6 10px);
  color: #444;
  font-size: 15px;
}
.namebox,
.fbtns,
.formula {
  display: flex;
  align-items: center;
  height: 30px;
  border: 1px solid #c6c6c6;
  background: #fff;
}
.namebox {
  width: 127px;
  padding: 0 8px 0 6px;
}
.namebox input {
  flex: 1;
}
.dots {
  display: flex;
  flex-direction: column;
  gap: 3px;
  margin: 8px 17px 0 17px;
}
.dots i {
  width: 3px;
  height: 3px;
  background: #a6a6a6;
}
.fbtns {
  width: 136px;
  margin-right: 4px;
}
.fbtns button {
  flex: 1;
  display: flex;
  justify-content: center;
}
.fbtns .fx {
  font: italic bold 19px/24px "Liberation Serif", serif;
  color: #6b6b6b;
}
.formula {
  position: relative;
  flex: 1;
  padding: 0 6px 0 12px;
  font-size: 16px;
}
.formula input {
  flex: 1;
}
.caret {
  position: absolute;
  left: 86px;
  top: 4px;
  width: 1px;
  height: 21px;
  background: #333;
}
.work {
  display: flex;
  flex: 1;
  min-height: 0;
  background: #e6e6e6;
}
.sheet {
  flex: 1;
  min-width: 0;
  overflow: hidden;
  background: linear-gradient(#e6e6e6 15px, #a0a0a0 15px);
}
table {
  table-layout: fixed;
  border-collapse: separate;
  border-spacing: 0;
  font-family: Lato, sans-serif;
  font-size: 13px;
  line-height: 17px;
  color: #111;
}
th,
td {
  padding: 0;
  text-align: center;
  vertical-align: middle;
  white-space: nowrap;
}
thead tr {
  height: 15px;
}
thead th {
  border-right: 1px solid #b8b8b8;
  border-bottom: 1px solid #9c9c9c;
  background: #e6e6e6;
  font: 11px/14px "Liberation Sans", sans-serif;
  color: #222;
}
thead .inside {
  border-bottom-color: #8c8cd6;
}
thead .pick {
  background: #d2d2d2;
  border-bottom: 2px solid #2b6373;
  line-height: 13px;
  color: #217346;
}
.corner svg {
  margin: 3px 0 0 13px;
}
tbody td,
.hd th {
  border-right: 1px solid #000;
  border-bottom: 1px solid #000;
  background: #fff;
}
.hd th {
  color: #000;
  font-size: 15px;
}
.hd,
.hd .rn {
  height: 48px;
}
.r1 {
  height: 31px;
}
.r20 {
  height: 24px;
}
tbody .rn {
  border-right: 1px solid #9494dc;
  border-bottom: 1px solid #b0b0b0;
  background: #e6e6e6;
  font: 11px/12px "Liberation Sans", sans-serif;
  color: #222;
  vertical-align: bottom;
}
tbody .first {
  border-left: 1px solid #00006c;
}
tbody .last {
  border-right: 3px solid #0000a8;
}
tbody .open {
  border-right: 0;
}
.hd .b2 {
  border-bottom-width: 2px;
}
tbody .caption {
  border-top: 1px solid #00006c;
  border-bottom: 2px solid #000;
  color: #0a0aa8;
  font-weight: bold;
  font-size: 14px;
}
tbody .out {
  border: 0;
  background: #a0a0a0;
  color: #fff;
  font-family: "Liberation Sans", sans-serif;
}
.over {
  display: flex;
  justify-content: center;
  overflow: hidden;
}
tbody .flag {
  background: linear-gradient(135deg, #1c7a34 4px, #a0a0a0 4px);
}
.vscroll {
  display: flex;
  flex-direction: column;
  flex: none;
  width: 18px;
  margin: 3px 4px 0 4px;
  background: #d9d9d9;
}
.vscroll button,
.hscroll button {
  display: flex;
  align-items: center;
  justify-content: center;
  width: 18px;
  height: 19px;
  border: 1px solid #ababab;
  background: #fff;
}
.vthumb {
  height: 234px;
  border: 1px solid #ababab;
  background: #fff;
}
.grow {
  flex: 1;
}
.sheets {
  display: flex;
  align-items: flex-start;
  flex: none;
  height: 29px;
  padding: 0 25px 0 28px;
  border-top: 1px solid #a0a0a0;
  background: #e6e6e6;
}
.nav {
  width: 28px;
  padding-top: 9px;
}
.stab {
  width: 130px;
  height: 26px;
  margin: -1px 0 0 19px;
  border: 1px solid #a0a0a0;
  border-top: 0;
  border-bottom: 2px solid #217346;
  background: #fff;
  color: #217346;
  font-weight: bold;
  font-size: 17px;
  line-height: 22px;
}
.add {
  margin: 3px 0 0 33px;
}
.hd3 {
  margin: 6px 15px 0 auto;
}
.hscroll {
  display: flex;
  margin-top: 4px;
}
.hthumb {
  width: 49px;
  margin-right: 2px;
  border: 1px solid #ababab;
  background: #fff;
}
.status {
  display: flex;
  align-items: center;
  flex: none;
  height: 27px;
  padding: 0 10px;
  border-top: 1px solid #c8c6c4;
  background: #f3f2f1;
  color: #666;
  font-size: 12px;
}
.mode {
  margin-right: auto;
}
.view {
  margin-right: 32px;
}
.view svg,
.zb svg {
  fill: none;
  stroke: #b4b2b0;
  stroke-width: 1.5;
}
.view + .zb {
  margin-left: -9px;
}
.zoom {
  appearance: none;
  width: 125px;
  height: 10px;
  margin: 0 6px 0 7px;
  background: linear-gradient(#b4b2b0, #b4b2b0) center / 100% 1px no-repeat;
}
.zoom::-webkit-slider-thumb {
  appearance: none;
  width: 1px;
  height: 8px;
  background: #b4b2b0;
}
.pct {
  margin-left: 16px;
  color: #b4b2b0;
}
.task {
  display: flex;
  flex: none;
  height: 50px;
  background: #1d1e1b;
}
.task button {
  display: flex;
  justify-content: center;
  align-items: center;
  flex: none;
}
.start,
.tv {
  width: 60px;
}
.tv {
  margin-right: 3px;
}
.tsearch {
  display: flex;
  align-items: center;
  gap: 13px;
  width: 430px;
  padding-left: 14px;
  border: 1px solid #c4c4c4;
  background: #f2f2f2;
  font-size: 18px;
}
.tsearch input {
  flex: 1;
}
.tsearch input::placeholder {
  color: #333;
  opacity: 1;
}
.task .app-b {
  position: relative;
  width: 62px;
}
.run::after {
  content: "";
  position: absolute;
  left: 5px;
  right: 5px;
  bottom: 0;
  height: 3px;
  background: #76b9ed;
}
.active {
  background: #494a48;
}
.active::after {
  left: 0;
  right: 0;
}
.tray {
  display: flex;
  margin-left: auto;
  padding-right: 5px;
  color: #fff;
}
.tray svg {
  fill: none;
  stroke: #fff;
  stroke-width: 1.5;
}
.tray .t1 {
  margin-right: 11px;
}
.tray .t2 {
  margin-right: 7px;
}
.tray .t3 {
  margin-right: 9px;
}
.tray .t4 {
  margin-right: 12px;
}
.lang {
  width: 51px;
  font-size: 15px;
}
.task .clock {
  flex-direction: column;
  width: 76px;
  font-size: 14px;
  line-height: 24px;
}
.clock span {
  height: 24px;
}
.clock .date {
  font-size: 12px;
}
.task .note {
  padding: 10px 10px 0 18px;
  border-right: 1px solid #777;
}
.note svg {
  stroke-width: 1;
}
.note text {
  stroke: none;
}
.mark {
  position: absolute;
  left: 44%;
  bottom: 22px;
  display: flex;
  flex-direction: column;
  align-items: center;
  width: 230px;
  color: #a8a8a8;
  opacity: 0.45;
  font-weight: bold;
  pointer-events: none;
}
.ar {
  font: bold 65px/72px "DejaVu Sans", sans-serif;
}
.en {
  font-size: 36px;
  line-height: 42px;
}
</style>
